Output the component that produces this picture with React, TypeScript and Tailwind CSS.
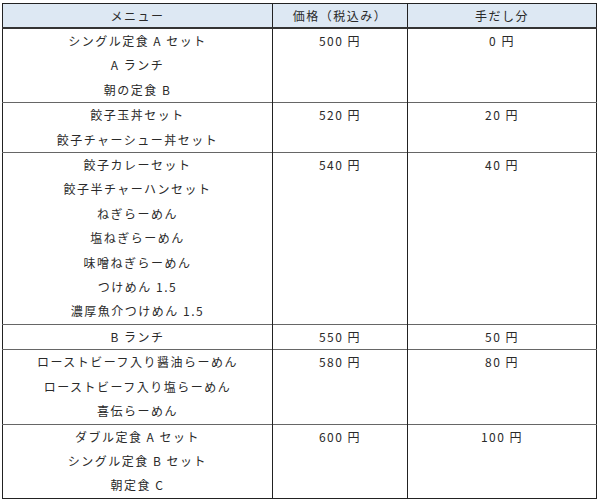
const ROWS: { items: string[]; price: string; tip: string }[] = [
  { items: ["シングル定食 A セット", "A ランチ", "朝の定食 B"], price: "500 円", tip: "0 円" },
  { items: ["餃子玉丼セット", "餃子チャーシュー丼セット"], price: "520 円", tip: "20 円" },
  {
    items: [
      "餃子カレーセット",
      "餃子半チャーハンセット",
      "ねぎらーめん",
      "塩ねぎらーめん",
      "味噌ねぎらーめん",
      "つけめん 1.5",
      "濃厚魚介つけめん 1.5",
    ],
    price: "540 円",
    tip: "40 円",
  },
  { items: ["B ランチ"], price: "550 円", tip: "50 円" },
  {
    items: ["ローストビーフ入り醤油らーめん", "ローストビーフ入り塩らーめん", "喜伝らーめん"],
    price: "580 円",
    tip: "80 円",
  },
  { items: ["ダブル定食 A セット", "シングル定食 B セット", "朝定食 C"], price: "600 円", tip: "100 円" },
];

export default function App() {
  return (
    <div className="w-[600px] h-[500px] bg-white pl-[2px] pt-[3px]">
      <table
        className="border-collapse border border-[#222] text-[12px] text-[#2a2a2a] tracking-[1.5px] text-center"
        style={{ fontFamily: '"Noto Sans CJK JP", sans-serif' }}
      >
        <thead>
          <tr className="bg-[#dde8f3] border-b-2 border-[#333]">
            <th className="w-[270px] h-[24px] p-0 font-normal border-r border-[#222] leading-[23px]">メニュー</th>
            <th className="w-[135px] h-[24px] p-0 font-normal border-r border-[#222] leading-[23px]">価格（税込み）</th>
            <th className="w-[189px] h-[24px] p-0 font-normal leading-[23px]">手だし分</th>
          </tr>
        </thead>
        <tbody>
          {ROWS.map((row) => (
            <tr key={row.price} className="border-b border-[#666] last:border-b-0 align-top">
              <td className="border-r border-[#222] p-0">
                {row.items.map((it) => (
                  <div key={it} className="leading-[24.4px]">
                    {it}
                  </div>
                ))}
              </td>
              <td className="border-r border-[#222] p-0 leading-[24.4px]">{row.price}</td>
              <td className="p-0 leading-[24.4px]">{row.tip}</td>
            </tr>
          ))}
        </tbody>
      </table>
    </div>
  );
}
